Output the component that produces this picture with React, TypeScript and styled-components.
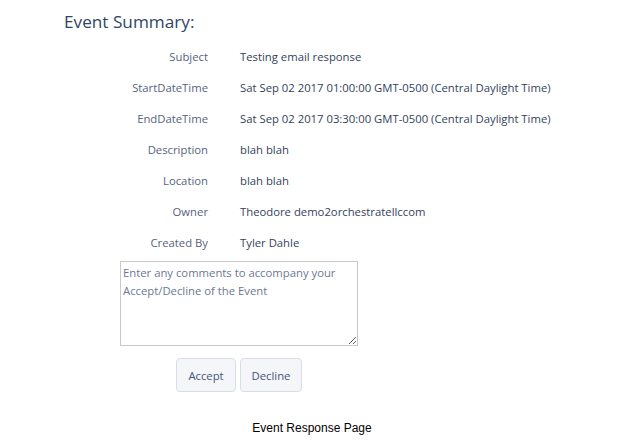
import React from "react";
import styled, { createGlobalStyle } from "styled-components";

const Global = createGlobalStyle`
  html, body { margin: 0; padding: 0; background: #ffffff; }
  body { font-family: "Open Sans", "Noto Sans", sans-serif; }
`;

const Page = styled.div`
  width: 624px;
  height: 441px;
  display: flex;
  flex-direction: column;
  box-sizing: border-box;
`;

const Title = styled.h1`
  margin: 0;
  padding: 10px 0 0 64px;
  font-size: 17.2px;
  font-weight: 400;
  line-height: 24px;
  color: #2f4468;
`;

const Details = styled.div`
  display: grid;
  grid-template-columns: 208px 1fr;
  column-gap: 32px;
  grid-auto-rows: 31px;
  margin-top: 7px;
`;

const Label = styled.div`
  text-align: right;
  font-size: 11.3px;
  line-height: 31px;
  color: #56637f;
`;

const Value = styled.div`
  font-size: 11.3px;
  line-height: 31px;
  color: #333f5c;
  white-space: nowrap;
`;

const Comments = styled.textarea`
  margin: 3px 0 0 120px;
  width: 238px;
  height: 85px;
  box-sizing: border-box;
  border: 1px solid #c9c9c9;
  padding: 2px 2px;
  font-family: "Open Sans", "Noto Sans", sans-serif;
  font-size: 11.3px;
  line-height: 18px;
  color: #333f5c;
  resize: both;
  &::placeholder { color: #6b7896; }
`;

const Actions = styled.div`
  display: flex;
  gap: 4px;
  margin: 12px 0 0 176px;
`;

const Button = styled.button<{ $w: number }>`
  width: ${(p) => p.$w}px;
  height: 34px;
  border: 1px solid #d8dde6;
  border-radius: 4px;
  background: #f4f6f9;
  font-family: "Open Sans", "Noto Sans", sans-serif;
  font-size: 11.3px;
  color: #44557a;
  padding: 0;
`;

const Caption = styled.div`
  margin-top: 29px;
  text-align: center;
  font-family: "Liberation Sans", Arial, sans-serif;
  font-size: 12px;
  color: #000;
`;

const rows: [string, string][] = [
  ["Subject", "Testing email response"],
  ["StartDateTime", "Sat Sep 02 2017 01:00:00 GMT-0500 (Central Daylight Time)"],
  ["EndDateTime", "Sat Sep 02 2017 03:30:00 GMT-0500 (Central Daylight Time)"],
  ["Description", "blah blah"],
  ["Location", "blah blah"],
  ["Owner", "Theodore demo2orchestratellccom"],
  ["Created By", "Tyler Dahle"],
];

export default function App() {
  return (
    <Page>
      <Global />
      <Title>Event Summary:</Title>
      <Details>
        {rows.map(([l, v]) => (
          <React.Fragment key={l}>
            <Label>{l}</Label>
            <Value>{v}</Value>
          </React.Fragment>
        ))}
      </Details>
      <Comments placeholder="Enter any comments to accompany your Accept/Decline of the Event" />
      <Actions>
        <Button $w={60}>Accept</Button>
        <Button $w={62}>Decline</Button>
      </Actions>
      <Caption>Event Response Page</Caption>
    </Page>
  );
}
